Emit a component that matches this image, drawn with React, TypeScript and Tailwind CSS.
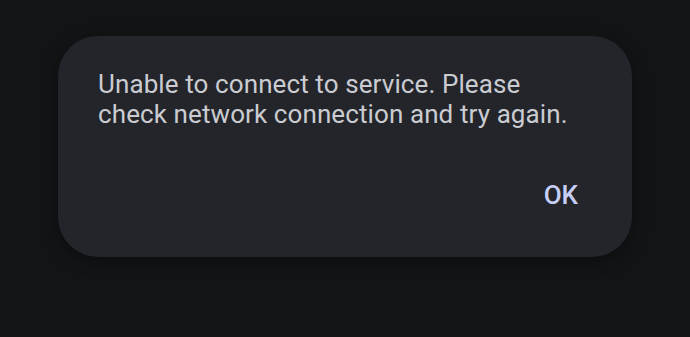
export default function App() {
  return (
    <div className="w-[690px] h-[337px] bg-[#131416] pt-[36px] pl-[58px] font-['Roboto',sans-serif]">
      <div className="w-[574px] h-[221px] rounded-[40px] bg-[#23252b] pt-[33px] pl-[40px] pr-[54px] flex flex-col shadow-[0_4px_16px_rgba(0,0,0,0.35)]">
        <p className="text-[26px] leading-[30px] tracking-[0.1px] text-[#cbccd1] whitespace-nowrap">
          Unable to connect to service. Please
          <br />
          check network connection and try again.
        </p>
        <div className="flex justify-end mt-[51px]">
          <button className="text-[26px] leading-[30px] font-medium tracking-[0px] text-[#c6cef6]">OK</button>
        </div>
      </div>
    </div>
  );
}
